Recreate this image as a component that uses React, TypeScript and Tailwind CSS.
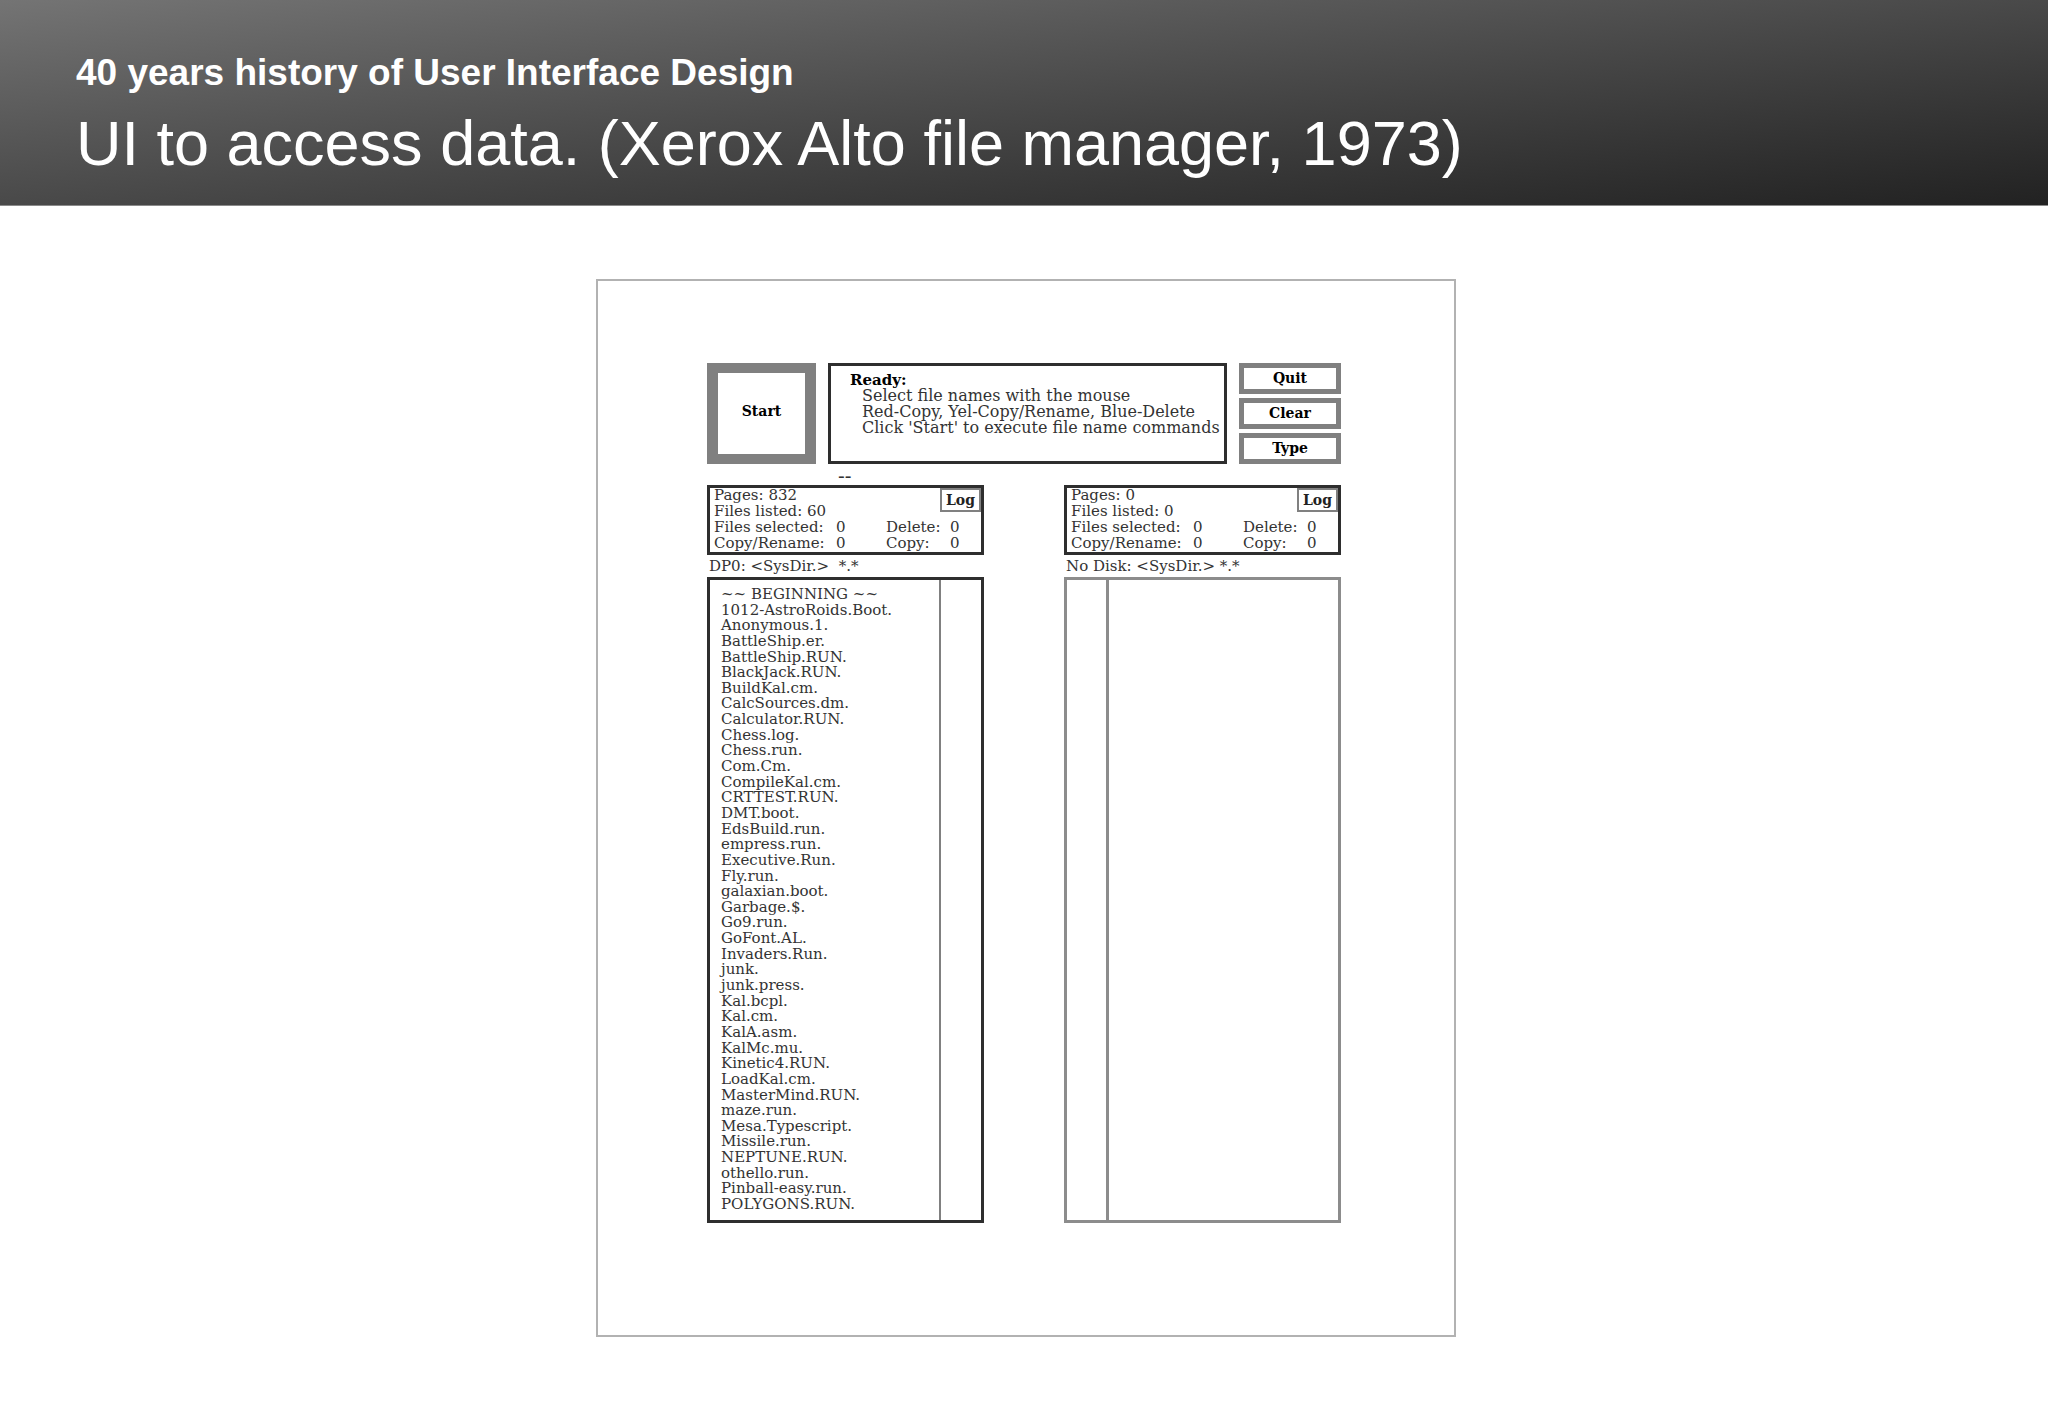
type Disk = {
  path: string;
  pages: number;
  listed: number;
  files: string[];
};

const leftDisk: Disk = {
  path: "DP0: <SysDir.>  *.*",
  pages: 832,
  listed: 60,
  files: [
    "~~ BEGINNING ~~",
    "1012-AstroRoids.Boot.",
    "Anonymous.1.",
    "BattleShip.er.",
    "BattleShip.RUN.",
    "BlackJack.RUN.",
    "BuildKal.cm.",
    "CalcSources.dm.",
    "Calculator.RUN.",
    "Chess.log.",
    "Chess.run.",
    "Com.Cm.",
    "CompileKal.cm.",
    "CRTTEST.RUN.",
    "DMT.boot.",
    "EdsBuild.run.",
    "empress.run.",
    "Executive.Run.",
    "Fly.run.",
    "galaxian.boot.",
    "Garbage.$.",
    "Go9.run.",
    "GoFont.AL.",
    "Invaders.Run.",
    "junk.",
    "junk.press.",
    "Kal.bcpl.",
    "Kal.cm.",
    "KalA.asm.",
    "KalMc.mu.",
    "Kinetic4.RUN.",
    "LoadKal.cm.",
    "MasterMind.RUN.",
    "maze.run.",
    "Mesa.Typescript.",
    "Missile.run.",
    "NEPTUNE.RUN.",
    "othello.run.",
    "Pinball-easy.run.",
    "POLYGONS.RUN.",
  ],
};

const rightDisk: Disk = {
  path: "No Disk: <SysDir.> *.*",
  pages: 0,
  listed: 0,
  files: [],
};

function DiskInfo({ disk }: { disk: Disk }) {
  return (
    <div className="grid h-[70px] grid-cols-[122px_50px_54px_1fr] grid-rows-[repeat(4,16px)] border-3 border-[#2e2e2e] pl-1 leading-[15px] whitespace-nowrap">
      <p className="col-span-3">Pages: {disk.pages}</p>
      <button className="row-span-2 h-6 border-2 border-[#808080] text-sm leading-4 font-bold text-[#222]">
        Log
      </button>
      <p className="col-span-3">Files listed: {disk.listed}</p>
      <span>Files selected:</span>
      <span>0</span>
      <span>Delete:</span>
      <span className="pl-2.5">0</span>
      <span>Copy/Rename:</span>
      <span>0</span>
      <span>Copy:</span>
      <span className="pl-2.5">0</span>
    </div>
  );
}

function CommandButton({ label }: { label: string }) {
  return (
    <button className="flex-1 border-5 border-[#808080] pb-0.5 text-sm leading-4 font-bold text-black">
      {label}
    </button>
  );
}

function FileManager() {
  return (
    <div className="mx-auto w-full max-w-[860px] border-2 border-[#b2b2b2] pt-[82px] pr-[113px] pb-28 pl-[109px] font-['DejaVu_Serif',serif] text-[15px] leading-4 text-[#333]">
      <div className="flex h-[101px] gap-3">
        <button className="w-[109px] border-x-11 border-y-10 border-[#808080] pb-1.5 text-sm font-bold text-black">
          Start
        </button>
        <div className="flex-1 border-3 border-[#2e2e2e] pt-1.5 pl-[19px] whitespace-nowrap">
          <p className="font-bold text-black">Ready:</p>
          <div className="pl-3 text-base leading-4">
            <p>Select file names with the mouse</p>
            <p>Red-Copy, Yel-Copy/Rename, Blue-Delete</p>
            <p>Click &apos;Start&apos; to execute file name commands</p>
          </div>
        </div>
        <div className="flex w-[102px] flex-col gap-1">
          <CommandButton label="Quit" />
          <CommandButton label="Clear" />
          <CommandButton label="Type" />
        </div>
      </div>
      <p className="h-[21px] pl-[131px] text-xl leading-6">--</p>
      <div className="grid grid-cols-[277px_277px] justify-between">
        <section>
          <DiskInfo disk={leftDisk} />
          <p className="h-[22px] pl-0.5 leading-[22px] whitespace-pre">
            {leftDisk.path}
          </p>
          <div className="flex h-[646px] border-3 border-[#2e2e2e]">
            <ul className="flex flex-1 flex-col justify-between pt-[7px] pb-2 pl-[11px] leading-[15px]">
              {leftDisk.files.map((file) => (
                <li key={file}>{file}</li>
              ))}
            </ul>
            <div className="w-[42px] border-l-2 border-[#808080]" />
          </div>
        </section>
        <section>
          <DiskInfo disk={rightDisk} />
          <p className="h-[22px] pl-0.5 leading-[22px] whitespace-pre">
            {rightDisk.path}
          </p>
          <div className="flex h-[646px] border-3 border-[#8c8c8c]">
            <div className="w-[42px] border-r-3 border-[#8c8c8c]" />
            <ul className="flex-1" />
          </div>
        </section>
      </div>
    </div>
  );
}

function App() {
  return (
    <div className="min-h-screen bg-white">
      <header className="border-b border-[#8a8a8a] bg-linear-to-br from-[#747474] to-[#222] px-[76px] pt-[49px] pb-[22px] font-['Liberation_Sans',Arial,sans-serif] text-white">
        <p className="text-[37px] leading-[48px] font-bold">
          40 years history of User Interface Design
        </p>
        <h1 className="pt-1.5 text-[63px] leading-[80px]">
          UI to access data. (Xerox Alto file manager, 1973)
        </h1>
      </header>
      <main className="pt-[73px] pb-20 pl-1">
        <FileManager />
      </main>
    </div>
  );
}

export default App;
